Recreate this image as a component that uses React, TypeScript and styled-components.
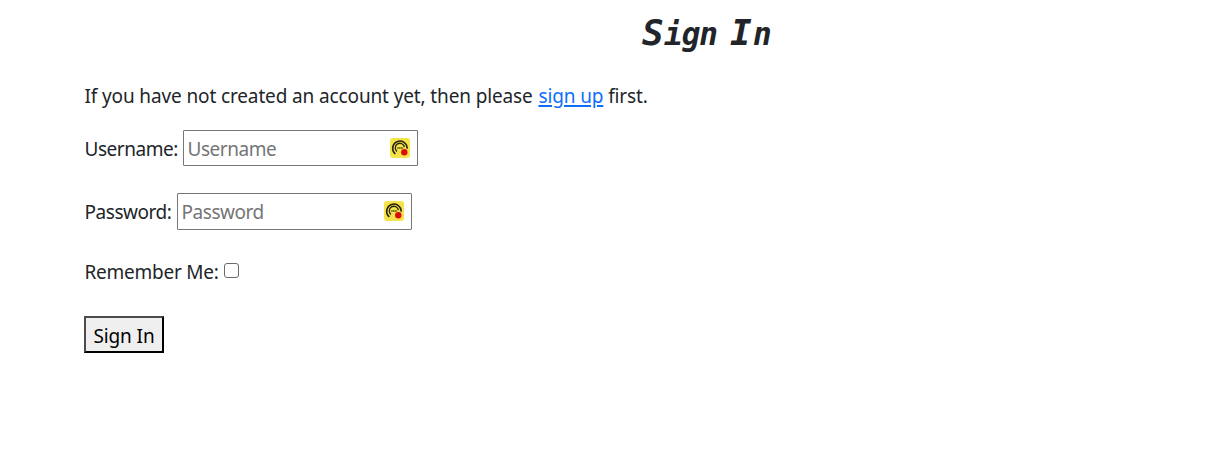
import React from 'react';
import styled, { createGlobalStyle } from 'styled-components';

const GlobalStyle = createGlobalStyle`
  *, *::before, *::after { box-sizing: border-box; }
  body {
    margin: 0;
    background: #fff;
    color: #212529;
    font: 400 19px/30px "Noto Sans", "Segoe UI", sans-serif;
  }
`;

const Page = styled.main`
  padding: 10px 0 0 84px;
`;

const Title = styled.h1`
  display: flex;
  align-items: baseline;
  margin: 0;
  height: 71px;
  padding-left: 558px;
  font: italic 700 31px/46px "DejaVu Sans Mono", monospace;
  letter-spacing: -1px;
  white-space: pre;
`;

const Capital = styled.span<{ $width: number }>`
  width: ${p => p.$width}px;
  font-size: 36px;
`;

const Rest = styled.span<{ $width?: number }>`
  width: ${p => (p.$width ? `${p.$width}px` : 'auto')};
`;

const Text = styled.span<{ $spacing: number }>`
  letter-spacing: ${p => p.$spacing}px;
  white-space: pre;
`;

const Intro = styled.p`
  margin: 0;
  height: 49px;
  padding-left: 0.5px;
  white-space: nowrap;
`;

const Link = styled.a`
  margin-left: 1px;
  color: #0d6efd;
  text-decoration: underline;
  text-decoration-thickness: 2px;
  text-underline-offset: 2px;
`;

const Row = styled.div<{ $height: number }>`
  display: flex;
  align-items: flex-start;
  height: ${p => p.$height}px;
`;

const Label = styled.label<{ $width: number; $top: number }>`
  width: ${p => p.$width}px;
  padding: ${p => p.$top}px 0 0 0.5px;
`;

const Field = styled.div<{ $height: number; $bottom: number }>`
  display: flex;
  align-items: center;
  width: 235px;
  height: ${p => p.$height}px;
  padding: 0 7px ${p => p.$bottom}px 3px;
  border: 1px solid #767676;
  border-radius: 1px;
`;

const Input = styled.input`
  flex: 1;
  min-width: 0;
  height: 100%;
  padding: 2px 0 0 0.5px;
  border: 0;
  outline: 0;
  background: transparent;
  font: inherit;
  letter-spacing: -0.45px;
  &::placeholder { color: #757575; opacity: 1; }
`;

const Check = styled.input`
  appearance: none;
  width: 15px;
  height: 15px;
  margin: 7px 0 0;
  border: 1px solid #6b6b6b;
  border-radius: 3px;
  background: #fff;
`;

const Submit = styled.button`
  display: block;
  width: 80px;
  height: 37px;
  padding: 2px 0 0;
  border: 2px outset #000;
  border-color: #4c4c4c #000 #000 #4c4c4c;
  border-radius: 0;
  background: #efefef;
  color: #000;
  font: inherit;
`;

const ManagerIcon = () => (
  <svg width="20" height="20" viewBox="0 0 20 20" aria-hidden="true">
    <rect width="20" height="20" rx="3" fill="#f5e34a" />
    <path d="M5.3 15.8A7.2 7.2 0 1 1 17.1 10.6" fill="none" stroke="#27230f" strokeWidth="1.7" />
    <path d="M7 13.5A4.6 4.6 0 1 1 14.4 9.2" fill="none" stroke="#27230f" strokeWidth="1.3" />
    <path d="M7.2 10h6" stroke="#514819" strokeWidth="1.5" strokeDasharray="1.5 .4" />
    <circle cx="14.3" cy="14.3" r="3.2" fill="#d90d09" />
  </svg>
);

export default function App() {
  return (
    <>
      <GlobalStyle />
      <Page>
        <Title>
          <Capital $width={22}>S</Capital>
          <Rest $width={66}>ign</Rest>
          <Capital $width={23}>I</Capital>
          <Rest>n</Rest>
        </Title>
        <Intro>
          <Text $spacing={-0.13}>
            If you have not created an account yet, then please <Link>sign up</Link> first.
          </Text>
        </Intro>
        <Row $height={63}>
          <Label $width={99} $top={4} htmlFor="username"><Text $spacing={-0.45}>Username:</Text></Label>
          <Field $height={36} $bottom={0}>
            <Input id="username" placeholder="Username" />
            <ManagerIcon />
          </Field>
        </Row>
        <Row $height={63}>
          <Label $width={93} $top={4} htmlFor="password"><Text $spacing={-0.45}>Password:</Text></Label>
          <Field $height={37} $bottom={1}>
            <Input id="password" type="password" placeholder="Password" />
            <ManagerIcon />
          </Field>
        </Row>
        <Row $height={60}>
          <Label $width={140} $top={1} htmlFor="remember"><Text $spacing={-0.24}>Remember Me:</Text></Label>
          <Check id="remember" type="checkbox" />
        </Row>
        <Submit type="button"><Text $spacing={-0.1}>Sign In</Text></Submit>
      </Page>
    </>
  );
}
